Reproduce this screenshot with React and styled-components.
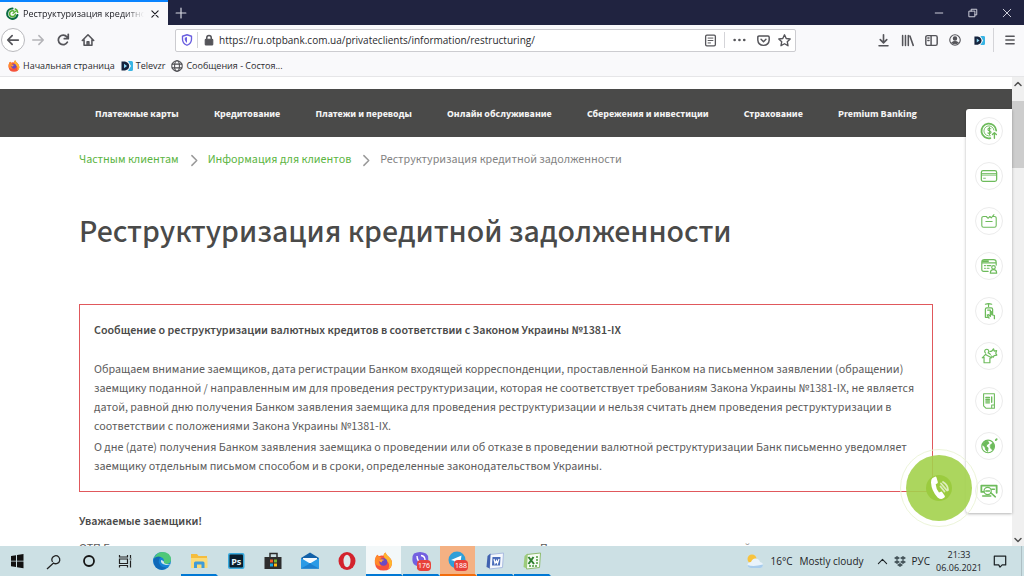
import React from "react";
import styled, { createGlobalStyle } from "styled-components";

const GlobalStyle = createGlobalStyle`
    * {
        box-sizing: border-box;
    }

    body {
        margin: 0;
        overflow: hidden;
        font-family: 'Open Sans', 'Noto Sans', sans-serif;
        color: #4a4a49;
    }

    button {
        padding: 0;
        border: none;
        background: none;
        color: inherit;
        font: inherit;
    }

    a {
        color: inherit;
        text-decoration: none;
    }

    svg {
        display: block;
        flex: none;
    }
`;

const Screen = styled.div`
    display: flex;
    flex-direction: column;
    height: 100vh;
    background-color: #fff;
`;

/* ---- browser ---- */

const TabBar = styled.div`
    display: flex;
    flex: none;
    height: 25px;
    background-color: #202340;
    color: #d8d9e2;
`;

const Tab = styled.div`
    display: flex;
    align-items: center;
    gap: 4px;
    width: 168px;
    padding: 0 6px;
    border-top: 2px solid #0a84ff;
    background-color: #f9f9fb;
    color: #1c1c22;
`;

const TabTitle = styled.span`
    flex: 1;
    min-width: 0;
    font-size: 9px;
    line-height: 16px;
    white-space: nowrap;
    mask-image: linear-gradient(to right, #000 84%, transparent);
`;

const TabClose = styled.button`
    display: flex;
    align-items: center;
    justify-content: center;
    width: 14px;
    height: 16px;
`;

const NewTab = styled.button`
    display: flex;
    align-items: center;
    justify-content: center;
    width: 25px;
`;

const WindowButtons = styled.div`
    display: flex;
    margin-left: auto;
`;

const WindowButton = styled.button`
    display: flex;
    align-items: center;
    justify-content: center;
    width: 34px;
`;

const Toolbar = styled.div`
    display: flex;
    flex: none;
    align-items: center;
    gap: 75px;
    height: 30px;
    padding: 0 2px 0 1px;
    background-color: #f9f9fb;
    color: #55555a;
`;

const ToolGroup = styled.div`
    display: flex;
    align-items: center;
    gap: ${({ $gap }) => $gap || "0"};
`;

const ToolButton = styled.button`
    display: flex;
    flex: none;
    align-items: center;
    justify-content: center;
    width: 24px;
    height: 24px;
    border-radius: 50%;
    border: ${({ $round }) => ($round ? "1px solid #b9b9bd" : "none")};
    background-color: ${({ $round }) => ($round ? "#fff" : "transparent")};
    color: ${({ $dim }) => ($dim ? "#b4b4b8" : "inherit")};
`;

const AddressBar = styled.div`
    display: flex;
    flex: 1;
    align-items: center;
    height: 23px;
    border: 1px solid #ccccd0;
    border-radius: 2px;
    background-color: #fff;
`;

const AddressIcon = styled.button`
    display: flex;
    flex: none;
    align-items: center;
    justify-content: center;
    width: ${({ $wide }) => ($wide ? "28px" : "21px")};
    height: 20px;
`;

const AddressInput = styled.input`
    flex: 1;
    min-width: 0;
    padding: 0;
    border: none;
    outline: none;
    background: none;
    font-family: 'Open Sans', 'Noto Sans', sans-serif;
    font-size: 10px;
    line-height: 16px;
    color: #2a2a2e;
`;

const Divider = styled.span`
    flex: none;
    width: 1px;
    height: ${({ $tall }) => ($tall ? "24px" : "16px")};
    margin: ${({ $tall }) => ($tall ? "0 4px 0 2px" : "0")};
    background-color: #d4d4d8;
`;

const Bookmarks = styled.div`
    display: flex;
    flex: none;
    align-items: center;
    gap: 6px;
    height: 22px;
    padding: 0 8px;
    border-bottom: 1px solid #e6e6e8;
    background-color: #f9f9fb;
`;

const Bookmark = styled.a`
    display: flex;
    align-items: center;
    gap: 3px;
    font-size: 9px;
    line-height: 16px;
    color: #2a2a2e;
    white-space: nowrap;
`;

/* ---- page ---- */

const Viewport = styled.div`
    position: relative;
    display: flex;
    flex: 1;
    min-height: 0;
`;

const Page = styled.div`
    flex: 1;
    min-width: 0;
    overflow: hidden;
    padding-top: 12px;
    font-family: 'Source Sans 3', 'Noto Sans CJK SC', sans-serif;
`;

const Nav = styled.nav`
    display: flex;
    align-items: center;
    justify-content: space-between;
    height: 48px;
    padding: 2px 95px 0;
    background-color: #4a4a49;
    color: #f4f4f4;
    font-size: 10px;
    font-weight: 700;
    line-height: 16px;
    white-space: nowrap;
`;

const Content = styled.main`
    padding: 0 79px;
`;

const Breadcrumbs = styled.nav`
    display: flex;
    align-items: center;
    gap: 8px;
    height: 46px;
    font-size: 12px;
    line-height: 20px;
    color: #838383;
    white-space: nowrap;
`;

const Crumb = styled.a`
    color: #5cb543;
`;

const Title = styled.h1`
    margin: 27px 0 50px;
    font-size: 32px;
    font-weight: 500;
    line-height: 44px;
    white-space: nowrap;
`;

const Notice = styled.section`
    padding: 16px 14px 13px;
    border: 1px solid #e0585c;
    font-size: 12px;
    line-height: 19px;
    color: #5c5c5c;
`;

const NoticeTitle = styled.h2`
    margin: 0 0 20px;
    font-size: 12px;
    font-weight: 600;
    line-height: 19px;
    color: #4a4a49;
`;

const Paragraph = styled.p`
    margin: 0 0 2px;
`;

const Greeting = styled.h3`
    margin: 20px 0 8px;
    font-size: 12px;
    font-weight: 600;
    line-height: 19px;
`;

const Intro = styled.p`
    display: grid;
    grid-template-columns: 461px 204px 1fr;
    margin: 0;
    font-size: 12px;
    line-height: 19px;
    white-space: nowrap;
    color: #5c5c5c;
`;

const Scrollbar = styled.div`
    display: flex;
    flex: none;
    flex-direction: column;
    align-items: center;
    width: 12px;
    background-color: #f0f0f0;
    color: #505050;
`;

const ScrollButton = styled.button`
    display: flex;
    align-items: center;
    justify-content: center;
    width: 12px;
    height: 13px;
`;

const ScrollTrack = styled.div`
    flex: 1;
    width: 100%;
    padding-top: 11px;
`;

const ScrollThumb = styled.div`
    height: 67px;
    background-color: #cdcdcd;
`;

const SidePanel = styled.aside`
    position: absolute;
    top: 32px;
    right: 12px;
    display: flex;
    flex-direction: column;
    align-items: center;
    gap: 17px;
    width: 46px;
    padding: 8px 0;
    border-radius: 3px 0 0 3px;
    background-color: #fff;
    box-shadow: 0 1px 3px rgba(0, 0, 0, 0.3);
`;

const SideButton = styled.button`
    display: flex;
    align-items: center;
    justify-content: center;
    width: 28px;
    height: 28px;
    border: 1px solid #ececec;
    border-radius: 50%;
    color: #6dbb5b;
`;

const CallRing = styled.div`
    position: absolute;
    right: 46px;
    bottom: 19px;
    padding: 5px;
    border: 1px solid #edf5da;
    border-radius: 50%;
`;

const CallButton = styled.button`
    display: flex;
    align-items: center;
    justify-content: center;
    width: 66px;
    height: 66px;
    border-radius: 50%;
    background-color: rgba(163, 209, 76, 0.9);
`;

/* ---- taskbar ---- */

const Taskbar = styled.footer`
    display: flex;
    flex: none;
    height: 30px;
    background-color: #cce0e4;
    color: #1d2326;
    font-size: 10px;
    line-height: 14px;
    white-space: nowrap;
`;

const taskColors = { firefox: "#f3f8f9", telegram: "#f4b183" };

const TaskButton = styled.button`
    display: flex;
    align-items: center;
    justify-content: center;
    width: ${({ $system }) => ($system ? "36px" : "37px")};
    padding-top: 2px;
    border-right: 2px solid #cce0e4;
    border-bottom: 2px solid ${({ $line }) => $line || "transparent"};
    background-color: ${({ $name }) => taskColors[$name] || "transparent"};
`;

const Tray = styled.div`
    display: flex;
    align-items: center;
    gap: 6px;
    margin-left: auto;
    margin-right: 2px;
    padding-right: 9px;
    border-right: 1px solid #aebfc4;
`;

const Weather = styled.div`
    display: flex;
    align-items: center;
    gap: 7px;
    margin-right: 7px;
`;

const Clock = styled.time`
    display: flex;
    flex-direction: column;
    align-items: center;
    font-size: 9px;
    line-height: 13px;
`;

const NotifyButton = styled.button`
    display: flex;
    justify-content: center;
    width: 24px;
`;

/* ---- icons ---- */

const Icon = ({ size = 14, box = 16, width = 1.5, children }) => (
    <svg
        width={size}
        height={size}
        viewBox={`0 0 ${box} ${box}`}
        fill="none"
        stroke="currentColor"
        strokeWidth={width}
        strokeLinecap="round"
        strokeLinejoin="round"
        aria-hidden="true"
    >
        {children}
    </svg>
);

const OtpLogo = () => (
    <Icon size={13} width={2.6}>
        <path d="M8 1.800A6.400 6.400 0 1 0 14 10" stroke="#0b6b43" />
        <path d="M9.500 5A3.600 3.600 0 1 0 11.500 9" stroke="#52ae32" strokeWidth="2" />
        <path d="M11.500 2.500q2.500 1.200 2.800 4" stroke="#52ae32" strokeWidth="2" />
        <path d="M8.500 8l4-3" stroke="#52ae32" strokeWidth="1.500" />
    </Icon>
);

const Televzr = ({ size = 12 }) => (
    <svg width={size} height={size} viewBox="0 0 12 12" aria-hidden="true">
        <path d="M7 1h3.500q1.500 0 1.500 1.500v7q0 1.500-1.500 1.500H7l3-5z" fill="#38b4e4" />
        <path d="M.5 1.500H4q4.200 1 4.200 4.500T4 10.500H.5z" fill="#15233d" />
        <path d="M3 3.800L6 6 3 8.200z" fill="#8fd8f4" />
    </svg>
);

const FirefoxIcon = ({ size }) => (
    <svg width={size} height={size} viewBox="0 0 20 20" aria-hidden="true">
        <path d="M2 5l1.500-2.200L5 4.500Q8 3 10 4q0-2 2-3.500Q13 3 15.500 5q3.500 3 3.500 7-1 7.500-9 7.500T1 12Q.5 8 2 5z" fill="#f5533d" />
        <path d="M12 .5Q13 3 15.500 5q3.500 3 3.500 7-.5 4-4 6 2-4 0-7-3-2-5-7 0-2 2-3.500z" fill="#ffb52e" />
        <path d="M2 5l1.500-2.200L5 4.500 8 5.800 5 9q0 4 3 6-5-.5-7-3-.5-4 1-7z" fill="#ff8a2a" />
        <circle cx="10" cy="10.500" r="4" fill="#6a4bc4" />
        <path d="M5 8.500q3-1.500 6 0-3 .5-3 2.500-2 0-3-2.500z" fill="#ffa436" />
    </svg>
);

const Globe = () => (
    <Icon size={12} width={1.4}>
        <circle cx="8" cy="8" r="7" stroke="#4c4c50" />
        <ellipse cx="8" cy="8" rx="3.200" ry="7" stroke="#4c4c50" />
        <path d="M1.500 5.500h13M1.500 10.500h13" stroke="#4c4c50" />
    </Icon>
);

const PhoneIcon = () => (
    <svg width="28" height="28" viewBox="0 0 28 28" aria-hidden="true">
        <circle cx="14" cy="14" r="13" fill="#9bcb3f" />
        <path d="M7.500 4L10 2.700q1-.4 1.500.8l1.300 4.500q.2 1-.7 1.500l-1.400.8q.3 4.500 3.300 8.200l1.800-.8q1-.3 1.500.5l2.400 3.600q.6 1-.3 1.800-3 2.800-6.800-.2Q6.500 17 6 8.500q-.1-3.200 1.500-4.500z" fill="#fff" />
        <path d="M16 9.500l6 7M18 8q5 3 5 8M15.500 12.500l4 5" fill="none" stroke="#dcedba" strokeWidth="1.800" strokeLinecap="round" />
    </svg>
);

const sideIcons = [
    ["Курсы валют", <>
        <path d="M11.500 18A8.200 8.200 0 1 1 18 9.500" strokeWidth="2" />
        <path d="M11.500 15.300A5.600 5.600 0 1 1 15.500 9" />
        <path d="M12 7.500q-3-1.500-3.200.6 0 1.500 1.600 1.700 2 .3 1.800 1.900-.5 1.600-3.400.4M10.500 6v8" strokeWidth="1.200" />
        <path d="M16 18v-6M13.800 14L16 11.800l2.200 2.200" strokeWidth="1.500" />
    </>],
    ["Карты", <>
        <rect x="1.500" y="4" width="17" height="12" rx="2" strokeWidth="1.400" />
        <path d="M2 7.300h16M2 9h16M4 12.500h2" />
    </>],
    ["Кредиты", <>
        <path d="M7 5H4Q2 5 2 7v8q0 2 2 2h12q2 0 2-2V7q0-2-2-2h-1M7 5l2 2 2-2 1.500 1.500L15.500 3M6.500 10.500h7" strokeWidth="1.200" />
    </>],
    ["Онлайн-банк", <>
        <path d="M9 16H4Q2 16 2 14V6q0-3 3-3h10q3 0 3 3v3M2 6.500h16M5 9.500h1M8 9.500h4M5 12.500h1M8 12.500h2" strokeWidth="1.300" />
        <path d="M3 4.500h6" strokeWidth="2" />
        <circle cx="15" cy="11.500" r="2" strokeWidth="1.300" />
        <path d="M11.500 18q0-4 3.500-4t3.500 4z" strokeWidth="1.300" />
    </>],
    ["Мобильное приложение", <>
        <path d="M6 2.500q3.500-1.500 7 0M9.500 2v3" strokeWidth="1.300" />
        <path d="M6 17V8q0-1.500 1.500-1.500h5Q14 6.500 14 8v5M6 17h4M8.500 9h3v5M10 18l-2-3.500 1.500-.5 2 2V11q1-.8 1.500.5v2.500l3 1v3.500" strokeWidth="1.400" />
    </>],
    ["Ипотека", <>
        <path d="M4.500 17.500v-6L2.500 12l4-4M7 9l6 3-2 .5v5H4.500M6 6.500a2.300 2.300 0 1 1 3 0q2 .5 2.500 2" strokeWidth="1.300" />
        <path d="M11 5q3 0 4-3l.8 2.500L18.500 4l-1 3 1.200 2-3 .5-1 2-2-1.500" strokeWidth="1.300" />
    </>],
    ["Документы", <>
        <path d="M4 2h12v16h-9.500L4 15.500zM13 18v-3.500h3" strokeWidth="1.200" />
        <path d="M6.500 6h4M6.500 8h4M6.500 10h4M6.500 12h4M13 5.500v6" strokeWidth="1.500" />
    </>],
    ["Отделения", <>
        <circle cx="9" cy="10.500" r="7" strokeWidth="1.300" />
        <path d="M2.800 8.500L6 4.500l3 .5 1 2-2.500 1.500L7 10.500l2 1.500-.5 4-2-1.500L5.500 11zM11.500 9l3-2.500 1.500 4-2 4-2-2z" fill="currentColor" />
        <path d="M17.500 3.500l1-1" strokeWidth="2" />
    </>],
    ["Обмен наличных", <>
        <path d="M1.500 4h17v8M1.500 4v7H4" strokeWidth="2" />
        <circle cx="8.500" cy="10" r="4" strokeWidth="1.300" />
        <path d="M12 12l5 4.500M3 15.500h9M13 8h3M6.500 10h4" strokeWidth="1.700" />
    </>],
];

const badge = (text) => (
    <>
        <rect x="6" y="9" width="14" height="11" rx="4" fill="#e8413a" />
        <text x="13" y="17" fontSize="7" fill="#fff" textAnchor="middle" fontFamily="Noto Sans, sans-serif">{text}</text>
    </>
);

const BLUE = "#0078d4";

const tasks = [
    { name: "Пуск", system: true, art: <path d="M4 5l5-.8v5.600H4zM10 4l6.500-1v6.800H10zM4 10.500h5v5.600L4 15.300zM10 10.500h6.500v6.800l-6.500-1z" fill="#111" /> },
    { name: "Поиск", system: true, art: <path d="M9.500 11A4 4 0 1 1 10.500 12L4 18" fill="none" stroke="#222" strokeWidth="1.300" /> },
    { name: "Cortana", system: true, art: <circle cx="10" cy="10" r="5" fill="none" stroke="#151515" strokeWidth="1.800" /> },
    { name: "Представление задач", system: true, art: <path d="M4.500 4v2h8V4M4.500 8h8v4.500h-8zM4.500 16.500v-2h8v2M15.500 4v3M15.500 9.500v7M14.500 8h2" fill="none" stroke="#222" strokeWidth="1.200" /> },
    { name: "Edge", art: <>
        <circle cx="10" cy="10" r="9" fill="#1684d6" />
        <path d="M2 7Q5 1 10 1q9 0 9 8-.5 4-5 4-3 0-2-3 0-4-5-4-3 0-5 2z" fill="#4fc878" />
        <path d="M1.500 8Q5 4.500 9 6q-3 2-2 6 2 5 8 4.500Q10 21 4 16.500 1 13 1.500 8z" fill="#1069b8" />
        <path d="M9 9q-1 4 5 5 4 0 4-1-3 1-6-1 .6-2-3-3z" fill="#cfe5e8" />
    </> },
    { name: "Проводник", line: BLUE, art: <>
        <path d="M2 3h6l1.500 2H18v12H2z" fill="#f5bd3d" />
        <path d="M2 7h16.500v10H2z" fill="#fbdb78" />
        <path d="M5 17v-5q0-1.500 1.500-1.500h7.500q1.500 0 1.500 1.500v5h-3v-3.500H8V17z" fill="#3f9bd8" />
    </> },
    { name: "Photoshop", art: <>
        <rect x="2" y="2" width="16.500" height="16" rx="2" fill="#38a9dd" />
        <rect x="3.500" y="3.500" width="13.500" height="13" rx="1" fill="#081c2b" />
        <text x="10.200" y="13.500" fontSize="9" fontWeight="700" fill="#e2f5fd" textAnchor="middle" fontFamily="Noto Sans, sans-serif">Ps</text>
    </> },
    { name: "Microsoft Store", art: <>
        <path d="M7 6V2.500h7V6" fill="none" stroke="#2b2b2b" strokeWidth="1.500" />
        <path d="M1.500 6h17v12h-17z" fill="#2d2d2d" />
        <path d="M7 8.500h3v3H7z" fill="#f15a29" />
        <path d="M11 8.500h3v3h-3z" fill="#7db72f" />
        <path d="M7 12.500h3v3H7z" fill="#19a6e0" />
        <path d="M11 12.500h3v3h-3z" fill="#fdb913" />
    </> },
    { name: "Почта", art: <>
        <path d="M1 7l9-5.500L19 7v10.500H1z" fill="#1261a8" />
        <path d="M3 7h14v5H3z" fill="#f5fafd" />
        <path d="M1 7l9 5.500L19 7v10.500H1z" fill="#2b9be6" />
        <path d="M1 17.500l9-5 9 5z" fill="#1c80cf" />
    </> },
    { name: "Opera", art: <>
        <ellipse cx="10" cy="10" rx="8.500" ry="9" fill="#d3232d" />
        <ellipse cx="10" cy="10" rx="3.500" ry="6.200" fill="#dceaec" />
    </> },
    { name: "Firefox", id: "firefox", line: BLUE, icon: <FirefoxIcon size={19} /> },
    { name: "Viber", line: BLUE, art: <>
        <path d="M3 2.500q6-3 12 0 3 2 2 8-1 5-8 5l-3 3v-3.500q-4-1-4.500-5Q1 4.500 3 2.500z" fill="#7360e0" />
        <path d="M6 5q0 5 5 8M10 4.500q4 .5 4 4.500" fill="none" stroke="#fff" strokeWidth="1.400" />
        {badge("176")}
    </> },
    { name: "Telegram", id: "telegram", line: "#f26c0c", art: <>
        <circle cx="9" cy="9" r="8.500" fill="#2f9fd8" />
        <path d="M3 9l10.500-4.500L12 14 8.500 11.500 7 13.500l-.5-3.500z" fill="#fff" />
        {badge("188")}
    </> },
    { name: "Word", line: BLUE, art: <>
        <path d="M5 3.500L18.500 2 17.500 16.500 4.500 18z" fill="#f5f8fd" stroke="#a9bbe0" />
        <path d="M2.500 5l3-2.500-.8 15L1.500 16z" fill="#4062b0" />
        <path d="M7.500 6h8l-.5 8.500H7z" fill="#4a6cba" />
        <path d="M9 8l1 4.500 1.500-3 1 3L14 8" fill="none" stroke="#fff" strokeWidth="1.200" />
    </> },
    { name: "Excel", line: BLUE, art: <>
        <path d="M5 3.500L18.500 2 17.500 16.500 4.500 18z" fill="#f6fbf4" stroke="#8dbb6e" />
        <path d="M2.500 5l3-2.500-.8 15L1.500 16z" fill="#9ccb7a" />
        <path d="M14 6h2.500M14 9h2.500M14 12h2.500M7 15h9" stroke="#4d9a3b" strokeWidth="1.500" strokeDasharray="2 1" />
        <path d="M6.500 6l5.500 7M11.500 6l-5 7" stroke="#2f7f2f" strokeWidth="2" />
    </> },
];

const navItems = [
    "Платежные карты",
    "Кредитование",
    "Платежи и переводы",
    "Онлайн обслуживание",
    "Сбережения и инвестиции",
    "Страхование",
    "Premium Banking",
];

const Browser = () => (
    <>
        <TabBar>
            <Tab>
                <OtpLogo />
                <TabTitle>Реструктуризация кредитной</TabTitle>
                <TabClose aria-label="Закрыть вкладку">
                    <Icon size={10} width={1.8}><path d="M3 3l10 10M13 3L3 13" /></Icon>
                </TabClose>
            </Tab>
            <NewTab aria-label="Новая вкладка">
                <Icon size={12} width={1.6}><path d="M8 1.500v13M1.500 8h13" /></Icon>
            </NewTab>
            <WindowButtons>
                <WindowButton aria-label="Свернуть"><Icon size={10}><path d="M2 8h12" /></Icon></WindowButton>
                <WindowButton aria-label="Развернуть"><Icon size={10}><path d="M2 5h9v9H2zM5 5V2h9v9h-3" /></Icon></WindowButton>
                <WindowButton aria-label="Закрыть"><Icon size={10}><path d="M2 2l12 12M14 2L2 14" /></Icon></WindowButton>
            </WindowButtons>
        </TabBar>
        <Toolbar>
            <ToolGroup $gap="1px">
                <ToolButton $round aria-label="Назад"><Icon width={2}><path d="M14 8H2.500M7 3L2 8l5 5" /></Icon></ToolButton>
                <ToolButton $dim aria-label="Вперёд"><Icon width={1.7}><path d="M2 8h11.500M9 3l5 5-5 5" /></Icon></ToolButton>
                <ToolButton aria-label="Обновить"><Icon width={2}><path d="M13 10.500A5.500 5.500 0 1 1 12.500 4.500M14 1.500V6.500H9.500" /></Icon></ToolButton>
                <ToolButton aria-label="Домой"><Icon width={1.8}><path d="M1.500 8.500L8 2l6.500 6.500M3.500 7.500V14h9V7.500M7 14v-4h2v4" /></Icon></ToolButton>
            </ToolGroup>
            <AddressBar>
                <AddressIcon aria-label="Защита">
                    <Icon size={12} width={1.8}>
                        <path d="M8 1L14 3v4q0 5.500-6 8-6-2.500-6-8V3z" stroke="#6a5fe0" />
                        <path d="M8 4v8q-3-2-3-5V5z" fill="#6a5fe0" stroke="none" />
                    </Icon>
                </AddressIcon>
                <Divider />
                <AddressIcon aria-label="Сведения о сайте">
                    <Icon size={12}>
                        <path d="M5 7V5q0-3 3-3t3 3v2" strokeWidth="2" />
                        <rect x="3" y="7" width="10" height="7.500" rx="1" fill="currentColor" />
                    </Icon>
                </AddressIcon>
                <AddressInput
                    aria-label="Адрес"
                    defaultValue="https://ru.otpbank.com.ua/privateclients/information/restructuring/"
                />
                <AddressIcon $wide aria-label="Режим чтения">
                    <Icon size={13} width={1.6}>
                        <rect x="2" y="1.500" width="12" height="13" rx="1.500" />
                        <path d="M5 5h6M5 8h6M5 11h3" strokeWidth="1.200" />
                    </Icon>
                </AddressIcon>
                <Divider />
                <AddressIcon $wide aria-label="Действия">
                    <Icon><path d="M3 8h.01M8.500 8h.01M14 8h.01" strokeWidth="3" /></Icon>
                </AddressIcon>
                <AddressIcon aria-label="Pocket">
                    <Icon size={13} width={1.8}><path d="M2.500 2.500h11q1.500 0 1.500 1.500v3.500q-.5 6-7 6.500-6.500-.5-7-6.500V4q0-1.500 1.500-1.500zM5 6.500l3 3 3-3" /></Icon>
                </AddressIcon>
                <AddressIcon aria-label="В закладки">
                    <Icon size={13} width={1.7}><path d="M8 1l2.100 4.500 4.900.6-3.600 3.400.9 4.900L8 12l-4.300 2.400.9-4.900L1 6.100l4.900-.6z" /></Icon>
                </AddressIcon>
            </AddressBar>
            <ToolGroup>
                <ToolButton aria-label="Загрузки"><Icon size={13} width={2}><path d="M8 1v9.500M4 7l4 4 4-4M2.500 14.500h11" /></Icon></ToolButton>
                <ToolButton aria-label="Библиотека"><Icon size={13} width={1.9}><path d="M2 2v12M5.500 2v12M9 2v12M11 2.500l4 11.500" /></Icon></ToolButton>
                <ToolButton aria-label="Боковая панель"><Icon size={13} width={1.8}><rect x="1" y="2" width="14" height="12" rx="2" /><path d="M7.500 2v12M3.500 5h1.500M3.500 8h1.500" /></Icon></ToolButton>
                <ToolButton aria-label="Аккаунт"><Icon size={12} width={1.5}><circle cx="8" cy="8" r="7" /><circle cx="8" cy="6" r="2.200" fill="currentColor" /><path d="M3.800 11.500q4.200-3 8.400 0Q8 14.500 3.800 11.500z" fill="currentColor" /></Icon></ToolButton>
                <ToolButton aria-label="Televzr"><Televzr size={11} /></ToolButton>
                <Divider $tall />
                <ToolButton aria-label="Меню"><Icon size={12} width={2}><path d="M2.500 3h11M2.500 8h11M2.500 13h11" /></Icon></ToolButton>
            </ToolGroup>
        </Toolbar>
        <Bookmarks>
            <Bookmark href="#"><FirefoxIcon size={12} />Начальная страница</Bookmark>
            <Bookmark href="#"><Televzr />Televzr</Bookmark>
            <Bookmark href="#"><Globe />Сообщения - Состоя...</Bookmark>
        </Bookmarks>
    </>
);

const Arrow = () => <Icon size={13} width={1.8}><path d="M6 2l6 6-6 6" stroke="#999" /></Icon>;

const BankPage = () => (
    <Page>
        <Nav>
            {navItems.map((item) => <a href="#" key={item}>{item}</a>)}
        </Nav>
        <Content>
            <Breadcrumbs>
                <Crumb href="#">Частным клиентам</Crumb>
                <Arrow />
                <Crumb href="#">Информация для клиентов</Crumb>
                <Arrow />
                <span>Реструктуризация кредитной задолженности</span>
            </Breadcrumbs>
            <Title>Реструктуризация кредитной задолженности</Title>
            <Notice>
                <NoticeTitle>Сообщение о реструктуризации валютных кредитов в соответствии с Законом Украины №1381-IX</NoticeTitle>
                <Paragraph>
                    Обращаем внимание заемщиков, дата регистрации Банком входящей корреспонденции, проставленной Банком на письменном заявлении (обращении) заемщику поданной / направленным им для проведения реструктуризации, которая не соответствует требованиям Закона Украины №1381-IX, не является датой, равной дню получения Банком заявления заемщика для проведения реструктуризации и нельзя считать днем проведения реструктуризации в соответствии с положениями Закона Украины №1381-IX.
                </Paragraph>
                <Paragraph>
                    О дне (дате) получения Банком заявления заемщика о проведении или об отказе в проведении валютной реструктуризации Банк письменно уведомляет заемщику отдельным письмом способом и в сроки, определенные законодательством Украины.
                </Paragraph>
            </Notice>
            <Greeting>Уважаемые заемщики!</Greeting>
            <Intro>
                <span>ОТП Б</span>
                <span>П</span>
                <span>й</span>
            </Intro>
        </Content>
    </Page>
);

const App = () => (
    <Screen>
        <GlobalStyle />
        <Browser />
        <Viewport>
            <BankPage />
            <Scrollbar>
                <ScrollButton aria-label="Вверх"><Icon size={8} width={3}><path d="M2 11l6-6 6 6" /></Icon></ScrollButton>
                <ScrollTrack><ScrollThumb /></ScrollTrack>
                <ScrollButton aria-label="Вниз"><Icon size={8} width={3}><path d="M2 5l6 6 6-6" /></Icon></ScrollButton>
            </Scrollbar>
            <SidePanel>
                {sideIcons.map(([name, art]) => (
                    <SideButton key={name} aria-label={name}>
                        <Icon size={18} box={20} width={1}>{art}</Icon>
                    </SideButton>
                ))}
            </SidePanel>
            <CallRing>
                <CallButton aria-label="Позвонить"><PhoneIcon /></CallButton>
            </CallRing>
        </Viewport>
        <Taskbar>
            {tasks.map(({ name, id, system, line, art, icon }) => (
                <TaskButton key={name} aria-label={name} $system={system} $line={line} $name={id}>
                    {icon || <svg width="20" height="20" viewBox="0 0 20 20" aria-hidden="true">{art}</svg>}
                </TaskButton>
            ))}
            <Tray>
                <Weather>
                    <svg width="18" height="16" viewBox="0 0 18 16" aria-hidden="true">
                        <circle cx="6" cy="6" r="4.500" fill="#f8c33d" />
                        <path d="M5 15q-3.500-.3-3.500-3T5 9q1.500-4 5-3.500T14 9q3 .5 3 3t-3 3z" fill="#e9f3fb" />
                        <path d="M5 15q-3.500-.3-3.500-3 6 2 15.500-.5 0 3.500-3 3.500z" fill="#a9cdec" />
                    </svg>
                    <span>16°C</span>
                    <span>Mostly cloudy</span>
                </Weather>
                <Icon size={11} width={1.6}><path d="M2 11l6-6 6 6" /></Icon>
                <svg width="12" height="12" viewBox="0 0 12 12" fill="#45545a" aria-hidden="true">
                    <path d="M3 1l3 2-3 2-3-2zM9 1l3 2-3 2-3-2zM3 5l3 2-3 2-3-2zM9 5l3 2-3 2-3-2zM6 8l3 2-3 2-3-2z" />
                </svg>
                <span>РУС</span>
                <Clock>
                    <span>21:33</span>
                    <span>06.06.2021</span>
                </Clock>
                <NotifyButton aria-label="Уведомления">
                    <Icon size={14} width={1.4}><path d="M1.500 2.500h13v10h-4L8 15l-1.500-2.500h-5z" /></Icon>
                </NotifyButton>
            </Tray>
        </Taskbar>
    </Screen>
);

export default App;
